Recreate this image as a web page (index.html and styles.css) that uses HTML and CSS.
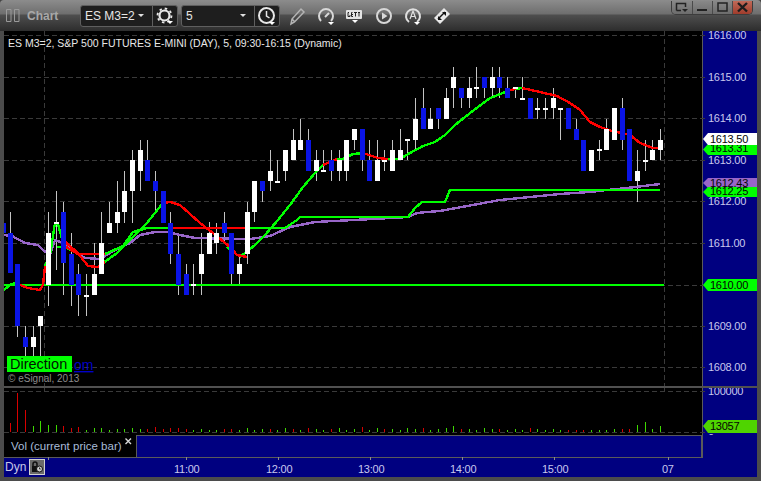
FILE: index.html
```html
<!DOCTYPE html>
<html lang="en">
<head>
<meta charset="utf-8">
<title>Chart</title>
<link rel="stylesheet" href="styles.css">
</head>
<body>
<div class="window">
  <header class="titlebar">
    <svg class="grip" width="14" height="13" viewBox="0 0 14 13"><path d="M.5.5h4.500v12h-4.500zM8.500.5h4.500v12h-4.500z"/></svg>
    <span class="title">Chart</span>
    <div class="combo combo-symbol">
      <span class="combo-text">ES M3=2</span>
      <svg class="caret" width="6" height="3" viewBox="0 0 6 3"><path d="M0 0h6L3 3z"/></svg>
      <span class="combo-btn">
        <svg width="20" height="20" viewBox="0 0 20 20"><circle cx="9.500" cy="9.500" r="5" fill="none" stroke="#e8e8e8" stroke-width="2.200"/><circle cx="9.500" cy="9.500" r="7" fill="none" stroke="#e8e8e8" stroke-width="1.800" stroke-dasharray="2.500 3"/><path d="M12 15h6l-3 3z" fill="#fff"/></svg>
      </span>
    </div>
    <div class="combo combo-interval">
      <span class="combo-text">5</span>
      <svg class="caret" width="6" height="3" viewBox="0 0 6 3"><path d="M0 0h6L3 3z"/></svg>
      <span class="combo-btn">
        <svg width="20" height="20" viewBox="0 0 20 20"><circle cx="9.500" cy="9.500" r="7.500" fill="none" stroke="#e8e8e8" stroke-width="2"/><path d="M9.500 5v5l3 2" fill="none" stroke="#e8e8e8" stroke-width="1.500"/><path d="M12 16h6l-3 3z" fill="#fff"/></svg>
      </span>
    </div>
    <div class="tools">
      <svg width="20" height="20" viewBox="0 0 20 20"><path d="M4 18l1-5L14 3l3 3-9.500 10zM5 13l3 3" fill="none" stroke="#b4b4b4" stroke-width="1.500"/></svg>
      <svg width="20" height="20" viewBox="0 0 20 20"><path d="M5 15a7 7 0 1 1 10 0" fill="none" stroke="#d8d8d8" stroke-width="2"/><path d="M9 11l4-4" stroke="#d8d8d8" stroke-width="2"/><path d="M12 16h6l-3 3z" fill="#fff"/></svg>
      <svg width="20" height="20" viewBox="0 0 20 20"><rect x="1" y="4" width="16" height="9" rx="1" fill="#e4e4e4"/><path d="M4 6.500H3v4h2V9M7.500 6.500H6.500v4h1.500M6.500 8.500h1.500M9 6.500h3M10.500 6.500v4M13 6.500h2M14 6.500v4" fill="none" stroke="#222" stroke-width="1"/><path d="M7 14h6l-3 3z" fill="#fff"/></svg>
      <svg width="20" height="20" viewBox="0 0 20 20"><circle cx="10" cy="10" r="7" fill="none" stroke="#d8d8d8" stroke-width="2"/><path d="M8 6.500v7l5.500-3.500z" fill="#d8d8d8"/></svg>
      <svg width="20" height="20" viewBox="0 0 20 20"><path d="M6 16a7 7 0 1 1 8 0" fill="none" stroke="#e0e0e0" stroke-width="2"/><path d="M7 13l3-8 3 8M8 10.500h4" fill="none" stroke="#e0e0e0" stroke-width="1.200"/><path d="M11 16h6l-3 3z" fill="#fff"/></svg>
      <svg width="20" height="20" viewBox="0 0 20 20"><path d="M2 12l10-10 6 6-10 10z" fill="#e8e8e8"/><path d="M10 6h4v4zM10 14H6v-4z" fill="#111"/><path d="M6 13l7-7" stroke="#111" stroke-width="1.500"/></svg>
    </div>
    <div class="winbtns">
      <span class="winbtn"><svg width="14" height="11" viewBox="0 0 14 11"><path d="M1.500 8.500v-7h9V5M1.500 8.500H6" fill="none" stroke="#222" stroke-width="1.500"/><path d="M7 7h6l-3 3z" fill="#222"/></svg></span>
      <span class="winbtn"><svg width="14" height="11" viewBox="0 0 14 11"><path d="M1 8h10" stroke="#222" stroke-width="2"/></svg></span>
      <span class="winbtn"><svg width="14" height="11" viewBox="0 0 14 11"><path d="M2 1h9v8H2z" fill="none" stroke="#222" stroke-width="1.500"/></svg></span>
      <span class="winbtn winbtn-close"><svg width="14" height="11" viewBox="0 0 14 11"><path d="M2 1l9 8.500M11 1L2 9.500" stroke="#1c1c1c" stroke-width="2.400"/></svg></span>
    </div>
  </header>

  <svg class="price-pane" width="753" height="355" viewBox="4 31 753 355">
    <rect class="plot" x="4" y="31" width="698" height="355"/>
    <rect class="axis-bg" x="702" y="31" width="55" height="355"/>
    <path class="axis-line" d="M702.500 31V386"/>
    <path class="grid" d="M4 35.500H707M4 77.500H707M4 118.500H707M4 160.500H707M4 201.500H707M4 243.500H707M4 285.500H707M4 326.500H707M4 367.500H707M44.500 31V386M664.500 31V386"/>
    <path class="wick" d="M10.500 212V273M17.500 264V337M25.500 326V357M33.500 326V357M40.500 316V357M48.500 212V306M56.500 191V270M63.500 202V295M71.500 233V306M78.500 264V316M86.500 274V316M94.500 243V295M101.500 212V274M109.500 202V233M117.500 181V233M124.500 171V223M132.500 150V223M140.500 140V191M147.500 140V181M155.500 171V213M170.500 212V264M178.500 233V295M186.500 264V295M193.500 264V295M201.500 233V295M209.500 222V254M216.500 223V254M224.500 212V243M231.500 233V285M239.500 254V285M247.500 202V264M254.500 181V222M262.500 181V202M270.500 150V191M277.500 160V183M285.500 150V181M293.500 129V160M300.500 119V150M308.500 129V171M316.500 150V181M323.500 150V172M331.500 150V181M339.500 150V181M346.500 140V181M354.500 129V150M362.500 129V171M369.500 140V181M377.500 140V181M384.500 150V171M392.500 140V171M400.500 129V160M407.500 139V160M415.500 98V150M423.500 88V129M430.500 108V129M438.500 108V129M446.500 88V119M453.500 67V108M461.500 88V108M469.500 77V108M476.500 67V98M484.500 77V98M492.500 67V98M499.500 67V98M507.500 77V98M515.500 87V98M522.500 77V100M530.500 98V119M537.500 98V119M545.500 98V119M553.500 88V119M560.500 108V140M576.500 119V140M599.500 140V160M606.500 119V150M622.500 98V150M637.500 150V202M645.500 140V171M652.500 140V160M660.500 129V160"/>
    <path class="line line-purple" d="M4 235L12 236L25 243L38 245L43 250L50 255L55 240L60 242L65 243L72 250L85 258L100 259L115 250L130 243L140 235L155 232L168 232L180 235L195 238L250 239L270 236L290 227L315 222L373 219L408 217L417 213L427 212L440 211L500 200L560 194L590 192L607 190L627 188L660 184"/>
    <path class="line line-green" d="M4 285H664M57 247H65L78 254H105L123 246L133 232L147 228H285L297 220L300 217H408L415 208L422 202H445L450 190H660"/>
    <path class="line line-red" d="M66 247L78 254H105M170 228H246"/>
    <path class="line line-green" d="M4 290L10 285L15 283L20 285M45 266L50 255L55 223L58 224L63 243M103 263L117 253L133 237L147 223L163 203M227 247L233 253M240 257L255 245L265 235L278 220L290 205L303 187L315 173L323 165M337 159H343L353 154L363 153M388 159H400L410 153L423 146L435 142L445 135L455 125L465 117L478 107L490 98L503 93L510 90M516 89L522 88"/>
    <path class="line line-red" d="M20 285L28 288L40 290L43 285L45 266M63 240L78 253L88 266L98 267L105 262M163 203L170 202L180 205L200 223L213 233L230 247L237 255L247 257M323 165L337 159M363 153L378 158L388 159M510 90L516 89M522 88L540 92L557 96L570 103L580 110L590 122L600 127L612 131M612 131L630 135L640 143L653 148L660 148"/>
    <path class="body-white" d="M33.500 337V347M40.500 316V326M48.500 233V285M56.500 222V224M86.500 295V297M94.500 274V295M101.500 243V274M109.500 223V233M117.500 212V223M124.500 191V212M132.500 160V191M140.500 150V171M193.500 284V286M201.500 254V274M209.500 233V254M216.500 233V243M239.500 264V274M247.500 212V254M254.500 181V212M270.500 171V181M277.500 181V183M285.500 150V171M293.500 140V160M300.500 140V150M316.500 160V171M323.500 170V172M339.500 160V171M346.500 140V171M354.500 129V140M377.500 160V181M384.500 160V162M392.500 150V171M400.500 150V160M407.500 139V141M415.500 119V140M430.500 119V129M446.500 98V119M453.500 77V88M469.500 88V98M476.500 87V89M492.500 77V88M515.500 87V89M522.500 98V100M537.500 108V110M545.500 108V110M553.500 98V108M560.500 108V110M591.500 150V171M599.500 149V151M606.500 129V150M614.500 108V140M637.500 171V181M645.500 160V162M652.500 150V160M660.500 140V150"/>
    <path class="body-blue" d="M10.500 233V273M17.500 264V326M25.500 337V347M63.500 212V263M71.500 254V285M78.500 274V295M147.500 160V181M155.500 181V191M163.500 191V223M170.500 223V254M178.500 254V285M186.500 274V295M224.500 223V233M231.500 233V274M262.500 181V191M308.500 140V171M331.500 160V171M362.500 129V160M369.500 160V181M423.500 108V129M438.500 108V119M461.500 88V98M484.500 77V88M499.500 77V88M507.500 88V98M530.500 98V119M568.500 108V129M576.500 129V140M583.500 140V171M622.500 108V140M629.500 129V181"/>
    <path class="body-blue-edge" d="M4 223h2v10H4z"/>

    <text class="legend" x="8" y="47">ES M3=2, S&amp;P 500 FUTURES E-MINI (DAY), 5, 09:30-16:15 (Dynamic)</text>
    <rect class="brand-bg" x="7" y="356" width="65" height="16"/>
    <text class="brand" x="10" y="369">Direction</text>
    <text class="brand-link" x="74" y="370">om</text>
    <text class="copyright" x="8" y="382">© eSignal, 2013</text>

    <g class="axis-text">
      <text x="708" y="39">1616.00</text>
      <text x="708" y="81">1615.00</text>
      <text x="708" y="122">1614.00</text>
      <text x="708" y="164">1613.00</text>
      <text x="708" y="205">1612.00</text>
      <text x="708" y="247">1611.00</text>
      <text x="708" y="330">1609.00</text>
      <text x="708" y="371">1608.00</text>
    </g>
    <path class="tag-green" d="M703 149.500L708 144H757V155H708z"/>
    <text class="tag-text" x="710" y="152">1613.31</text>
    <path class="tag-white" d="M703 139L708 133H757V145H708z"/>
    <text class="tag-text" x="710" y="143">1613.50</text>
    <path class="tag-purple" d="M703 183L708 178H757V188H708z"/>
    <text class="tag-text" x="710" y="187">1612.43</text>
    <path class="tag-green" d="M703 192L708 187H757V197H708z"/>
    <text class="tag-text" x="710" y="195">1612.25</text>
    <path class="tag-green" d="M703 285L708 279H757V291H708z"/>
    <text class="tag-text" x="710" y="289">1610.00</text>
  </svg>

  <div class="separator"></div>

  <svg class="volume-pane" width="753" height="47" viewBox="4 388 753 47">
    <rect class="plot" x="4" y="388" width="698" height="47"/>
    <rect class="axis-bg" x="702" y="388" width="55" height="47"/>
    <path class="axis-line" d="M702.500 388V435"/>
    <path class="grid" d="M4 391.500H707M4 432.500H707M44.500 388V392M664.500 388V392"/>
    <path class="vol-red" d="M10.500 423V432M17.500 393V432M25.500 410V432M63.500 426V432M71.500 428V432M78.500 427V432M147.500 429V432M155.500 427V432M163.500 429V432M170.500 428V432M178.500 428V432M186.500 429V432M224.500 429V432M231.500 429V432M270.500 429V432M293.500 429V432M308.500 428V432M331.500 429V432M362.500 427V432M384.500 429V432M423.500 428V432M461.500 429V432M499.500 429V432M530.500 428V432M568.500 430V432M576.500 430V432M583.500 430V432M622.500 429V432M629.500 429V432"/>
    <path class="vol-green" d="M33.500 426V432M40.500 421V432M48.500 425V432M56.500 425V432M86.500 430V432M94.500 428V432M101.500 428V432M109.500 430V432M117.500 429V432M124.500 429V432M132.500 428V432M140.500 429V432M193.500 430V432M201.500 429V432M209.500 430V432M216.500 430V432M239.500 430V432M247.500 428V432M254.500 430V432M262.500 429V432M277.500 430V432M285.500 428V432M300.500 430V432M316.500 429V432M323.500 430V432M339.500 428V432M346.500 430V432M354.500 429V432M369.500 430V432M377.500 428V432M392.500 429V432M400.500 430V432M407.500 428V432M415.500 429V432M430.500 430V432M438.500 429V432M446.500 428V432M453.500 426V432M469.500 429V432M476.500 430V432M484.500 428V432M492.500 429V432M507.500 430V432M515.500 429V432M522.500 430V432M537.500 429V432M545.500 430V432M553.500 429V432M560.500 430V432M591.500 430V432M599.500 430V432M606.500 430V432M614.500 429V432M637.500 425V432M645.500 422V432M652.500 429V432M660.500 426V432"/>
    <text class="axis-text-plain" x="708" y="395">100000</text>
    <text class="axis-text-plain" x="708" y="442">0</text>
    <path class="tag-vol" d="M703 426L708 420H757V433H708z"/>
    <text class="tag-text" x="710" y="430">13057</text>
  </svg>

  <div class="label-row">
    <div class="study-label">
      <span>Vol (current price bar)</span>
      <svg class="study-close" width="7" height="7" viewBox="0 0 7 7"><path d="M.5.500l5.500 5.500M6 .5L.5 6" stroke="#d8d8d8" stroke-width="1.400"/></svg>
    </div>
    <div class="study-fill"></div>
    <div class="axis-fill"></div>
  </div>

  <div class="time-row">
    <div class="dyn">
      <span>Dyn</span>
      <span class="lock"><svg width="12" height="12" viewBox="0 0 12 12"><path d="M2 5V3a2 2 0 0 1 4 0v2" fill="none" stroke="#111" stroke-width="1.500"/><rect x="1" y="5" width="6" height="6" fill="#111"/><circle cx="8.500" cy="8" r="3" fill="#ccc" stroke="#111"/><path d="M8.500 6.500V8h1.300" fill="none" stroke="#111" stroke-width=".8"/></svg></span>
    </div>
    <svg class="time-axis" width="709" height="20" viewBox="48 457 709 20">
      <path class="axis-line" d="M48 457.500H703"/>
      <path class="tick" d="M48.500 457v3M186.500 457v3M278.500 457v3M370.500 457v3M462.500 457v3M554.500 457v3M668.500 457v3"/>
      <g class="axis-text">
        <text x="174" y="473">11:00</text>
        <text x="266" y="473">12:00</text>
        <text x="358" y="473">13:00</text>
        <text x="450" y="473">14:00</text>
        <text x="542" y="473">15:00</text>
        <text x="662" y="473">07</text>
      </g>
    </svg>
  </div>
</div>
</body>
</html>
```

FILE: styles.css
```css
* { box-sizing: border-box; }
html, body { margin: 0; padding: 0; background: #444; }
body { font-family: "Liberation Sans", Arial, sans-serif; }
svg { display: block; }

.window {
  width: 761px;
  height: 481px;
  overflow: hidden;
  padding: 0 4px;
  background: #4b4b4b;
  border-radius: 4px 4px 0 0;
}

/* Title bar */
.titlebar {
  display: flex;
  align-items: center;
  height: 31px;
  margin: 0 -4px;
  padding: 0 8px 0 6px;
  background: linear-gradient(#8c8c8c 0, #6e6e6e 14px, #4e4e4e 15px, #2d2d2d 31px);
}
.grip { flex: none; fill: none; stroke: #9a9a9a; }
.title {
  flex: none;
  width: 53px;
  margin-left: 7px;
  font-size: 12px;
  font-weight: bold;
  color: #a8a8a8;
}
.combo {
  flex: none;
  display: flex;
  align-items: center;
  height: 22px;
  background: #1e1e1e;
  border: 1px solid #5f5f5f;
  border-radius: 3px;
  color: #e6e6e6;
  font-size: 12px;
}
.combo-symbol { width: 98px; }
.combo-interval { width: 99px; margin-left: 3px; }
.combo-text { flex: 1; padding-left: 4px; white-space: nowrap; }
.caret { flex: none; fill: #e0e0e0; margin-right: 8px; }
.combo-btn {
  flex: none;
  display: flex;
  align-items: center;
  justify-content: center;
  width: 25px;
  height: 100%;
  border-left: 1px solid #5f5f5f;
}
.tools {
  display: flex;
  gap: 9px;
  margin-left: 7px;
}
.winbtns {
  display: flex;
  align-self: flex-start;
  margin-left: auto;
  margin-top: 1px;
  height: 14px;
  border: 1px solid #3c3c3c;
  border-top: 0;
  border-radius: 0 0 5px 5px;
  overflow: hidden;
}
.winbtn {
  display: flex;
  align-items: center;
  justify-content: center;
  width: 20px;
  background: linear-gradient(#888, #6c6c6c);
  border-left: 1px solid #4a4a4a;
}
.winbtn:first-child { border-left: 0; }
.winbtn-close { background: linear-gradient(#c06a58, #a03c2c); }

/* Chart */
.plot { fill: #000; }
.axis-bg { fill: #000080; }
.axis-line { stroke: #5a5a5a; stroke-width: 1; fill: none; }
.grid { stroke: #3a3a3a; stroke-width: 1; stroke-dasharray: 5 3; fill: none; }
.wick { stroke: #c4c4c4; stroke-width: 1; fill: none; }
.body-white { stroke: #fff; stroke-width: 5; fill: none; }
.body-blue { stroke: #0a14e6; stroke-width: 5; fill: none; }
.body-blue-edge { fill: #0a14e6; }
.line { fill: none; stroke-width: 2.400; stroke-linejoin: round; shape-rendering: crispEdges; }
.line-green { stroke: #00ff00; }
.line-red { stroke: #ff0000; }
.line-purple { stroke: #9866c8; }

.legend { font-size: 10.500px; fill: #e8e8e8; }
.brand-bg { fill: #00ff00; }
.brand { font-size: 14.500px; fill: #001400; }
.brand-link { font-size: 14px; fill: #0000c8; text-decoration: underline; }
.copyright { font-size: 10px; fill: #8c8c8c; }

.axis-text text, .axis-text-plain { font-size: 11px; letter-spacing: -.25px; fill: #c8c8ee; }
.tag-text { font-size: 11px; letter-spacing: -.25px; fill: #050505; }
.tag-white { fill: #fff; }
.tag-green { fill: #00ff00; }
.tag-purple { fill: #9866c8; }
.tag-vol { fill: #4fd400; }

.separator { height: 2px; background: #505050; }

.vol-red { stroke: #d80000; stroke-width: 1; fill: none; }
.vol-green { stroke: #3ed800; stroke-width: 1; fill: none; }

/* Study label row */
.label-row { display: flex; height: 22px; }
.study-label {
  position: relative;
  display: flex;
  align-items: center;
  width: 132px;
  padding-left: 7px;
  background: #000;
  color: #a8bcd8;
  font-size: 11.500px;
}
.study-close { position: absolute; top: 3px; right: 4px; }
.study-fill {
  width: 567px;
  background: #000080;
  border: 1px solid #5a5a5a;
  border-bottom: 0;
  border-right-width: 2px;
}
.axis-fill { flex: 1; background: #000080; }

/* Time axis */
.time-row {
  display: flex;
  height: 20px;
  background: #000080;
}
.dyn {
  display: flex;
  align-items: flex-start;
  gap: 3px;
  width: 44px;
  padding: 2px 0 0 1px;
  color: #c8c8e8;
  font-size: 12px;
  border-top: 1px solid #5a5a5a;
}
.lock {
  display: flex;
  align-items: center;
  justify-content: center;
  width: 16px;
  height: 16px;
  margin-top: -1px;
  background: #6a6a6a;
  border: 1px solid #d0d0d0;
}
.tick { stroke: #8a8a8a; stroke-width: 1; fill: none; }
```
